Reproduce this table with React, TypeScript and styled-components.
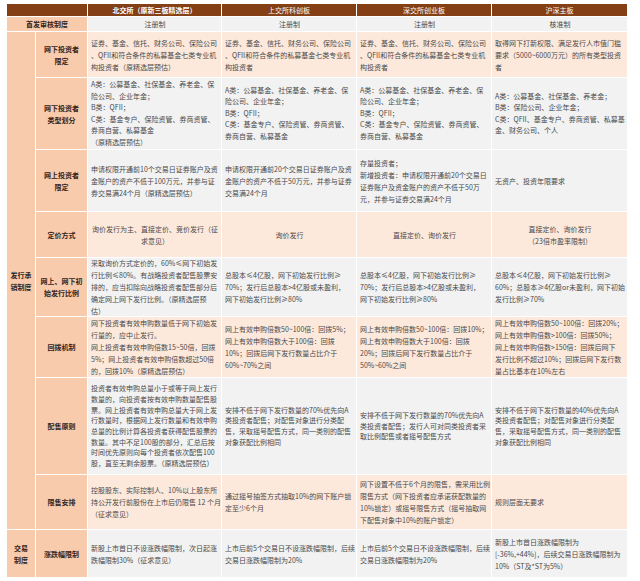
import React from 'react';
import styled, { createGlobalStyle } from 'styled-components';

const Global = createGlobalStyle`
  html, body { margin: 0; padding: 0; background: #ffffff; }
  body { font-family: "Noto Sans CJK SC", "Noto Sans", sans-serif; }
`;

const Page = styled.div`
  padding: 4px 0 0 7px;
`;

const Table = styled.div`
  display: grid;
  grid-template-columns: 28px 51px 133px 134px 134px 135px;
  grid-template-rows: 12px 14px 45px 71px 61px 45px 58px 60px 96px 54px 47px;
  gap: 1px;
  width: 620px;
  background: #ffffff;
  font-size: 7px;
`;

const HeadCell = styled.div<{ $span?: number; $bold?: boolean }>`
  grid-column: span ${(p) => p.$span ?? 1};
  background: #843f14;
  color: #ffffff;
  display: flex;
  align-items: center;
  justify-content: center;
  font-weight: ${(p) => (p.$bold ? 700 : 400)};
  white-space: nowrap;
`;

const LabelCell = styled.div<{ $span?: number; $rows?: number }>`
  grid-column: span ${(p) => p.$span ?? 1};
  grid-row: span ${(p) => p.$rows ?? 1};
  background: #f8cbad;
  color: #33231a;
  font-weight: 700;
  display: flex;
  align-items: center;
  justify-content: center;
  text-align: center;
  line-height: 12px;
  white-space: nowrap;
`;

const DataCell = styled.div<{ $tone: 'pink' | 'gray'; $center?: boolean }>`
  background: ${(p) => (p.$tone === 'pink' ? '#fde9dc' : '#f2f2f2')};
  color: #4a4a4a;
  display: flex;
  align-items: center;
  justify-content: ${(p) => (p.$center ? 'center' : 'flex-start')};
  padding: 0 2px 0 3px;
  overflow: visible;
`;

const Text = styled.div<{ $lh: number; $center?: boolean }>`
  line-height: ${(p) => p.$lh}px;
  white-space: nowrap;
  text-align: ${(p) => (p.$center ? 'center' : 'left')};
`;

type Row = {
  label: string[];
  tone: 'pink' | 'gray';
  center?: boolean;
  lh?: number;
  cells: string[][];
  category?: { lines: string[]; rows: number };
};

const same1 = [
  '证券、基金、信托、财务公司、保险公司',
  '、QFII和符合条件的私募基金七类专业机',
  '构投资者',
];
const type2 = [
  'A类：公募基金、社保基金、养老金、保',
  '险公司、企业年金；',
  'B类：QFII；',
  'C类：基金专户、保险资管、券商资管、',
  '券商自营、私募基金',
];
const ratio2 = [
  '总股本≤4亿股，网下初始发行比例≥',
  '70%；发行后总股本>4亿股或未盈利，',
  '网下初始发行比例≥80%',
];
const limit2 = ['上市后前5个交易日不设涨跌幅限制，后续', '交易日涨跌幅限制为20%'];

const rows: Row[] = [
  {
    label: ['网下投资者', '限定'],
    tone: 'pink',
    category: { lines: ['发行承', '销制度'], rows: 8 },
    cells: [
      [
        '证券、基金、信托、财务公司、保险公司',
        '、QFII和符合条件的私募基金七类专业机',
        '构投资者（原精选层预估）',
      ],
      same1,
      same1,
      [
        '取得网下打新权限、满足发行人市值门槛',
        '要求（5000~6000万元）的所有类型投资',
        '者',
      ],
    ],
  },
  {
    label: ['网下投资者', '类型划分'],
    tone: 'gray',
    lh: 11.5,
    cells: [
      [...type2, '（原精选层预估）'],
      type2,
      type2,
      [
        'A类：公募基金、社保基金、养老金；',
        'B类：保险公司、企业年金；',
        'C类：QFII、基金专户、券商资管、私募基',
        '金、财务公司、个人',
      ],
    ],
  },
  {
    label: ['网上投资者', '限定'],
    tone: 'gray',
    cells: [
      [
        '申请权限开通前10个交易日证券账户及资',
        '金账户的资产不低于100万元，并参与证',
        '券交易满24个月（原精选层预估）',
      ],
      [
        '申请权限开通前20个交易日证券账户及资',
        '金账户的资产不低于50万元，并参与证券',
        '交易满24个月',
      ],
      [
        '存量投资者；',
        '新增投资者：申请权限开通前20个交易日',
        '证券账户及资金账户的资产不低于50万',
        '元，并参与证券交易满24个月',
      ],
      ['无资产、投资年限要求'],
    ],
  },
  {
    label: ['定价方式'],
    tone: 'pink',
    center: true,
    cells: [
      ['询价发行为主、直接定价、竞价发行（征', '求意见）'],
      ['询价发行'],
      ['直接定价、询价发行'],
      ['直接定价、询价发行', '（23倍市盈率限制）'],
    ],
  },
  {
    label: ['网上、网下初', '始发行比例'],
    tone: 'gray',
    cells: [
      [
        '采取询价方式定价的，60%≤网下初始发',
        '行比例≤80%。有战略投资者配售股票安',
        '排的，应当扣除向战略投资者配售部分后',
        '确定网上网下发行比例。（原精选层预',
        '估）',
      ],
      ratio2,
      ratio2,
      [
        '总股本≤4亿股，网下初始发行比例≥',
        '60%；总股本≥4亿股or未盈利，网下初始',
        '发行比例≥70%',
      ],
    ],
  },
  {
    label: ['回拨机制'],
    tone: 'pink',
    cells: [
      [
        '网下投资者有效申购数量低于网下初始发',
        '行量的，应中止发行。',
        '网上投资者有效申购倍数15~50倍，回拨',
        '5%；网上投资者有效申购倍数超过50倍',
        '的，回拨10%（原精选层预估）',
      ],
      [
        '网上有效申购倍数50~100倍：回拨5%；',
        '网上有效申购倍数大于100倍：回拨',
        '10%；回拨后网下发行数量占比介于',
        '60%~70%之间',
      ],
      [
        '网上有效申购倍数50~100倍：回拨10%；',
        '网上有效申购倍数大于100倍：回拨',
        '20%；回拨后网下发行数量占比介于',
        '50%~60%之间',
      ],
      [
        '网上有效申购倍数50~100倍：回拨20%；',
        '网上有效申购倍数>100倍：回拨50%；',
        '网上有效申购倍数>150倍：回拨后网下',
        '发行比例不超过10%；回拨后网下发行数',
        '量占比基本在10%左右',
      ],
    ],
  },
  {
    label: ['配售原则'],
    tone: 'gray',
    lh: 10.7,
    cells: [
      [
        '投资者有效申购总量小于或等于网上发行',
        '数量的，向投资者按有效申购数量配售股',
        '票。网上投资者有效申购总量大于网上发',
        '行数量时，根据网上发行数量和有效申购',
        '总量的比例计算各投资者获得配售股票的',
        '数量。其中不足100股的部分，汇总后按',
        '时间优先原则向每个投资者依次配售100',
        '股，直至无剩余股票。（原精选层预估）',
      ],
      [
        '安排不低于网下发行数量的70%优先向A',
        '类投资者配售；对配售对象进行分类配',
        '售，采取摇号配售方式，同一类别的配售',
        '对象获配比例相同',
      ],
      [
        '安排不低于网下发行数量的70%优先向A',
        '类投资者配售；发行人可对同类投资者采',
        '取比例配售或者摇号配售方式',
      ],
      [
        '安排不低于网下发行数量的40%优先向A',
        '类投资者配售；对配售对象进行分类配',
        '售，采取摇号配售方式，同一类别的配售',
        '对象获配比例相同',
      ],
    ],
  },
  {
    label: ['限售安排'],
    tone: 'pink',
    cells: [
      [
        '控股股东、实际控制人、10%以上股东所',
        '持公开发行前股份在上市后仍限售 12 个月',
        '（征求意见）',
      ],
      ['通过摇号抽签方式抽取10%的网下账户锁', '定至少6个月'],
      [
        '网下设置不低于6个月的限售，需采用比例',
        '限售方式（网下投资者应承诺获配数量的',
        '10%锁定）或摇号限售方式（摇号抽取网',
        '下配售对象中10%的账户锁定）',
      ],
      ['规则层面无要求'],
    ],
  },
  {
    label: ['涨跌幅限制'],
    tone: 'gray',
    category: { lines: ['交易', '制度'], rows: 1 },
    cells: [
      ['新股上市首日不设涨跌幅限制，次日起涨', '跌幅限制30%（征求意见）'],
      limit2,
      limit2,
      [
        '新股上市首日涨跌幅限制为',
        '[-36%,+44%]，后续交易日涨跌幅限制为',
        '10%（ST及*ST为5%）',
      ],
    ],
  },
];

const Lines: React.FC<{ lines: string[] }> = ({ lines }) => (
  <>
    {lines.map((l, i) => (
      <React.Fragment key={i}>
        {i > 0 && <br />}
        {l}
      </React.Fragment>
    ))}
  </>
);

export default function App() {
  return (
    <>
      <Global />
      <Page>
        <Table>
          <HeadCell $span={2} />
          <HeadCell $bold>北交所（原新三板精选层）</HeadCell>
          <HeadCell>上交所科创板</HeadCell>
          <HeadCell>深交所创业板</HeadCell>
          <HeadCell>沪深主板</HeadCell>

          <LabelCell $span={2}>首发审核制度</LabelCell>
          {['注册制', '注册制', '注册制', '核准制'].map((t, i) => (
            <DataCell key={i} $tone="gray" $center>
              <Text $lh={12} $center>
                {t}
              </Text>
            </DataCell>
          ))}

          {rows.map((r, ri) => (
            <React.Fragment key={ri}>
              {r.category && (
                <LabelCell $rows={r.category.rows}>
                  <Lines lines={r.category.lines} />
                </LabelCell>
              )}
              <LabelCell>
                <Lines lines={r.label} />
              </LabelCell>
              {r.cells.map((c, ci) => (
                <DataCell key={ci} $tone={r.tone} $center={r.center}>
                  <Text $lh={r.lh ?? 12} $center={r.center}>
                    <Lines lines={c} />
                  </Text>
                </DataCell>
              ))}
            </React.Fragment>
          ))}
        </Table>
      </Page>
    </>
  );
}
